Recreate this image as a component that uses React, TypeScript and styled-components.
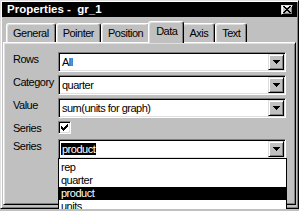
import React from 'react'
import styled, { createGlobalStyle } from 'styled-components'

const GlobalStyle = createGlobalStyle`
  html, body {
    margin: 0;
    padding: 0;
    background: #c0c0c0;
  }
  body {
    font-family: 'Liberation Sans', Arial, sans-serif;
    font-size: 11px;
    letter-spacing: -0.5px;
    color: #000;
    overflow: hidden;
  }
`

const Window = styled.div`
  box-sizing: border-box;
  width: 299px;
  height: 209px;
  background: #c0c0c0;
  border: 1px solid;
  border-color: #dfdfdf #000 #000 #dfdfdf;
  box-shadow: inset 1px 1px #fff, inset -1px -1px #808080;
  padding: 1px;
  display: flex;
  flex-direction: column;
`

const TitleBar = styled.div`
  height: 15px;
  background: #000;
  display: flex;
  align-items: center;
  justify-content: space-between;
  padding: 0 4px 0 5px;
`

const Title = styled.span`
  font-weight: bold;
  font-size: 11.5px;
  letter-spacing: 0;
  color: #fff;
  white-space: pre;
  line-height: 15px;
`

const RaisedButton = styled.div<{ $w: number; $h: number }>`
  box-sizing: border-box;
  width: ${(p) => p.$w}px;
  height: ${(p) => p.$h}px;
  background: #c0c0c0;
  border: 1px solid;
  border-color: #dfdfdf #000 #000 #dfdfdf;
  box-shadow: inset 1px 1px #fff, inset -1px -1px #808080;
  display: flex;
  align-items: center;
  justify-content: center;
  flex-shrink: 0;
`

const Body = styled.div`
  flex: 1;
  display: flex;
  flex-direction: column;
  padding: 4px 1px 2px;
`

const TabStrip = styled.div`
  height: 21px;
  display: flex;
  align-items: flex-end;
  padding-left: 3px;
`

const Tab = styled.div<{ $active?: boolean }>`
  position: relative;
  box-sizing: border-box;
  height: ${(p) => (p.$active ? 22 : 19)}px;
  margin: ${(p) => (p.$active ? '0 -2px -1px' : '0')};
  padding: ${(p) => (p.$active ? '0 6px 3px 7px' : '0 6px 0 6px')};
  z-index: ${(p) => (p.$active ? 2 : 1)};
  background: #c0c0c0;
  border-left: 1px solid #fff;
  border-top: 1px solid #fff;
  border-right: 1px solid #000;
  border-radius: 3px 3px 0 0;
  box-shadow: inset -1px 0 #808080, inset 1px 1px #dfdfdf;
  display: flex;
  align-items: center;
  white-space: nowrap;
  line-height: 14px;
`

const Panel = styled.div`
  flex: 1;
  position: relative;
  z-index: 1;
  border: 1px solid;
  border-color: #fff #000 #000 #fff;
  box-shadow: inset 1px 1px #dfdfdf, inset -1px -1px #808080;
  padding: 9px 0 0 9px;
`

const Form = styled.div`
  display: grid;
  grid-template-columns: 45px 228px;
  row-gap: 3px;
`

const Label = styled.div`
  line-height: 14px;
  white-space: nowrap;
`

const Combo = styled.div`
  position: relative;
  box-sizing: border-box;
  height: 20px;
  background: #fff;
  border: 1px solid;
  border-color: #808080 #fff #fff #808080;
  box-shadow: inset 1px 1px #000, inset -1px -1px #dfdfdf;
  display: flex;
  align-items: center;
  padding: 1px 1px 1px 3px;
`

const ComboText = styled.span`
  flex: 1;
  line-height: 13px;
  white-space: nowrap;
  & > mark {
    background: #000;
    color: #fff;
    padding: 0 1px;
    margin-left: -1px;
  }
`

const CheckRow = styled.div`
  height: 15px;
`

const CheckBox = styled.div`
  box-sizing: border-box;
  width: 13px;
  height: 13px;
  background: #fff;
  border: 1px solid;
  border-color: #808080 #fff #fff #808080;
  box-shadow: inset 1px 1px #000, inset -1px -1px #dfdfdf;
  display: flex;
  align-items: center;
  justify-content: center;
`

const DropList = styled.div`
  position: absolute;
  top: 100%;
  left: -1px;
  width: 229px;
  box-sizing: border-box;
  padding-top: 2px;
  background: #fff;
  border: 1px solid #000;
  z-index: 5;
`

const ListItem = styled.div<{ $active?: boolean }>`
  height: 13px;
  line-height: 13px;
  padding-left: 2px;
  background: ${(p) => (p.$active ? '#000' : '#fff')};
  color: ${(p) => (p.$active ? '#fff' : '#000')};
`

const Arrow = () => (
  <svg width="7" height="4" viewBox="0 0 7 4" shapeRendering="crispEdges">
    <path d="M0 0h7v1H0zM1 1h5v1H1zM2 2h3v1H2zM3 3h1v1H3z" fill="#000" />
  </svg>
)

const CloseGlyph = () => (
  <svg width="8" height="7" viewBox="0 0 8 7" shapeRendering="crispEdges">
    <path d="M0 0h2v1H0zM6 0h2v1H6zM1 1h2v1H1zM5 1h2v1H5zM2 2h4v1H2zM3 3h2v1H3zM2 4h4v1H2zM1 5h2v1H1zM5 5h2v1H5zM0 6h2v1H0zM6 6h2v1H6z" fill="#000" />
  </svg>
)

const CheckGlyph = () => (
  <svg width="7" height="7" viewBox="0 0 7 7" shapeRendering="crispEdges">
    <path d="M6 0h1v3H6zM5 1h1v3H5zM4 2h1v3H4zM3 3h1v3H3zM2 4h1v3H2zM1 3h1v3H1zM0 2h1v3H0z" fill="#000" />
  </svg>
)

function DropButton() {
  return (
    <RaisedButton $w={16} $h={16}>
      <Arrow />
    </RaisedButton>
  )
}

const tabs = ['General', 'Pointer', 'Position', 'Data', 'Axis', 'Text']
const seriesOptions = ['rep', 'quarter', 'product', 'units']

export default function App() {
  return (
    <>
      <GlobalStyle />
      <Window>
        <TitleBar>
          <Title>{'Properties -  gr_1'}</Title>
          <RaisedButton $w={12} $h={10}>
            <CloseGlyph />
          </RaisedButton>
        </TitleBar>
        <Body>
          <TabStrip>
            {tabs.map((t) => (
              <Tab key={t} $active={t === 'Data'}>
                {t}
              </Tab>
            ))}
          </TabStrip>
          <Panel>
            <Form>
              <Label>Rows</Label>
              <Combo>
                <ComboText>All</ComboText>
                <DropButton />
              </Combo>
              <Label>Category</Label>
              <Combo>
                <ComboText>quarter</ComboText>
                <DropButton />
              </Combo>
              <Label>Value</Label>
              <Combo>
                <ComboText>sum(units for graph)</ComboText>
                <DropButton />
              </Combo>
              <Label>Series</Label>
              <CheckRow>
                <CheckBox>
                  <CheckGlyph />
                </CheckBox>
              </CheckRow>
              <Label>Series</Label>
              <Combo>
                <ComboText>
                  <mark>product</mark>
                </ComboText>
                <DropButton />
                <DropList>
                  {seriesOptions.map((o) => (
                    <ListItem key={o} $active={o === 'product'}>
                      {o}
                    </ListItem>
                  ))}
                </DropList>
              </Combo>
            </Form>
          </Panel>
        </Body>
      </Window>
    </>
  )
}
